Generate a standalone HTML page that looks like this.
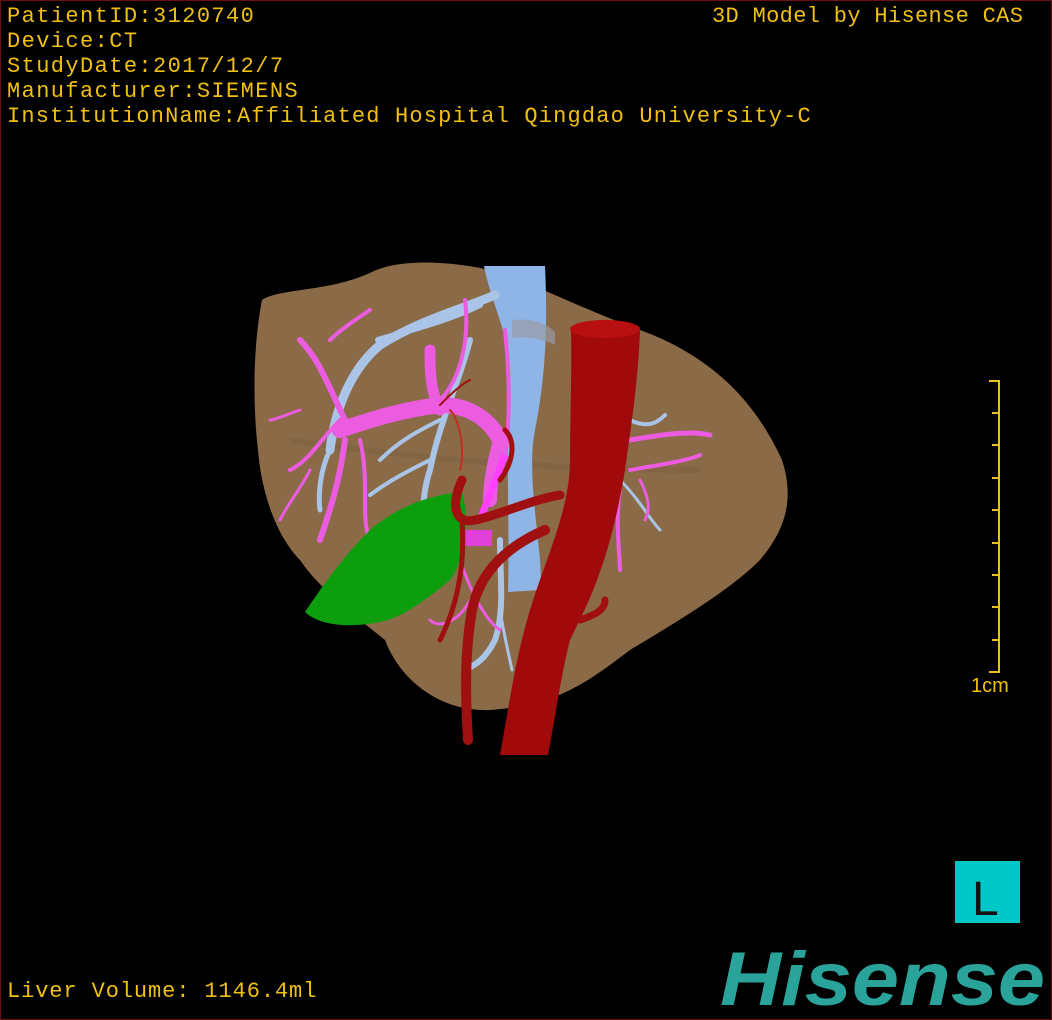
<!DOCTYPE html>
<html><head><meta charset="utf-8"><style>
html,body{margin:0;padding:0;background:#000;}
#w{position:relative;width:1050px;height:1018px;border:1px solid #6a1010;overflow:hidden;background:#000;}
.t{position:absolute;left:6px;color:#f0c010;font-family:"Liberation Mono",monospace;font-size:22px;letter-spacing:1.4px;line-height:25px;white-space:pre;}
</style></head><body><div id="w">
<svg width="1052" height="1020" style="position:absolute;left:-1px;top:-1px">
<!-- liver -->
<path d="M262,300 C280,288 330,292 372,272 C400,258 450,262 480,268 C520,276 560,300 640,330 C700,352 750,390 782,460 C795,500 785,530 760,560 C730,590 680,620 630,650 C590,680 560,705 490,710 C440,712 400,680 385,640 C360,620 320,590 300,560 C280,540 262,500 258,450 C252,400 254,340 262,300 Z" fill="#8a6a47"/>
<path d="M290,440 C360,450 500,470 700,470" stroke="#7e6040" stroke-width="6" fill="none" opacity=".5"/>
<!-- IVC -->
<path d="M484,266 L545,266 C548,330 545,380 535,430 C525,480 545,560 540,590 L508,592 C510,520 505,450 510,380 C512,340 490,300 484,266 Z" fill="#8fb4e6"/>
<path d="M512,320 C530,318 545,322 555,332 L555,345 C540,338 525,336 512,338 Z" fill="#9a9aa4" opacity=".7"/>
<!-- blue branches -->
<g stroke="#a9c4e6" fill="none" stroke-linecap="round">
<path d="M495,295 C460,310 420,320 380,345 C350,370 335,410 330,450" stroke-width="9"/>
<path d="M480,305 C450,320 410,330 378,340" stroke-width="6"/>
<path d="M330,450 C320,470 318,495 320,510" stroke-width="5"/>
<path d="M470,340 C460,380 440,420 430,470 C420,500 425,520 420,540" stroke-width="6"/>
<path d="M440,420 C420,430 400,440 380,460" stroke-width="4"/>
<path d="M430,460 C410,470 390,480 370,495" stroke-width="4"/>
<path d="M500,540 C500,580 505,610 495,640 C485,660 475,665 465,670" stroke-width="6"/>
<path d="M500,610 C505,640 510,660 512,670" stroke-width="3"/>
<path d="M630,420 C650,430 660,420 665,415" stroke-width="4"/>
<path d="M620,480 C640,500 650,520 660,530" stroke-width="3"/>
</g>
<!-- pink branches -->
<g stroke="#ec5ce0" fill="none" stroke-linecap="round">
<path d="M340,430 C370,420 400,410 440,405 C470,405 490,420 500,440" stroke-width="16"/>
<path d="M430,350 C430,370 430,390 440,410" stroke-width="11"/>
<path d="M345,420 C330,390 320,360 300,340" stroke-width="6"/>
<path d="M340,420 C320,440 310,460 290,470" stroke-width="4"/>
<path d="M345,440 C340,480 330,510 320,540" stroke-width="6"/>
<path d="M360,440 C370,480 360,520 370,540" stroke-width="4"/>
<path d="M330,340 C340,330 355,320 370,310" stroke-width="4"/>
<path d="M440,400 C460,380 470,340 465,300" stroke-width="4"/>
<path d="M310,470 C300,490 290,500 280,520" stroke-width="3"/>
<path d="M300,410 C285,415 275,420 270,420" stroke-width="3"/>
<path d="M630,440 C660,435 690,430 710,435" stroke-width="5"/>
<path d="M630,470 C660,465 690,460 700,455" stroke-width="4"/>
<path d="M640,480 C650,500 650,510 645,520" stroke-width="3"/>
<path d="M620,490 C615,520 620,560 620,570" stroke-width="4"/>
<path d="M500,440 C495,460 490,480 490,500" stroke-width="14"/>
<path d="M470,600 C460,620 440,630 430,620" stroke-width="3"/>
<path d="M460,560 C470,590 485,620 500,630" stroke-width="3"/>
<path d="M505,330 C510,380 510,420 505,460" stroke-width="4"/>
</g>
<rect x="458" y="530" width="34" height="16" fill="#e040d8"/>
<path d="M480,520 L505,455" stroke="#ff40ff" stroke-width="7"/>
<!-- green gallbladder -->
<path d="M305,612 C320,590 340,560 370,530 C400,505 430,495 462,492 C470,520 465,560 450,580 C420,605 400,618 380,622 C350,628 320,626 305,612 Z" fill="#0d9e0d"/>
<!-- small red arteries -->
<g stroke="#a01010" fill="none" stroke-linecap="round">
<path d="M560,495 C530,500 500,515 475,520 C455,525 450,505 462,480" stroke-width="9"/>
<path d="M545,530 C510,545 480,570 472,610 C465,650 465,690 468,740" stroke-width="10"/>
<path d="M462,520 C465,560 460,600 440,640" stroke-width="5"/>
<path d="M500,480 C515,460 515,440 505,430" stroke-width="5"/>
<path d="M580,620 C595,615 605,610 605,600" stroke-width="7"/>
<path d="M440,405 C450,395 460,385 470,380" stroke-width="2"/>
<path d="M450,410 C460,420 465,450 460,470" stroke-width="2" stroke="#c03020"/>
</g>
<!-- aorta -->
<path d="M571,330 C600,318 640,322 640,332 C638,380 632,420 625,470 C610,560 590,600 570,640 C560,680 555,720 548,755 L500,755 C510,700 515,660 530,610 C545,560 570,510 570,460 C570,420 572,370 571,330 Z" fill="#a00a0a"/>
<ellipse cx="605" cy="329" rx="35" ry="9" fill="#b81010"/>
<!-- scale bar -->
<g stroke="#e8c020" stroke-width="2">
<line x1="999" y1="380" x2="999" y2="673"/>
<line x1="989" y1="381" x2="999" y2="381"/><line x1="992" y1="413" x2="999" y2="413"/><line x1="992" y1="445" x2="999" y2="445"/><line x1="992" y1="478" x2="999" y2="478"/><line x1="992" y1="510" x2="999" y2="510"/><line x1="992" y1="543" x2="999" y2="543"/><line x1="992" y1="575" x2="999" y2="575"/><line x1="992" y1="607" x2="999" y2="607"/><line x1="992" y1="640" x2="999" y2="640"/><line x1="989" y1="672" x2="999" y2="672"/>
</g>
<text x="971" y="692" fill="#f0c010" font-family="Liberation Sans, sans-serif" font-size="20">1cm</text>
<rect x="955" y="861" width="65" height="62" fill="#00c8c8"/>
<text x="972" y="915" fill="#111" font-family="Liberation Sans, sans-serif" font-size="48">L</text>
<text x="720" y="1005" fill="#2aa39a" font-family="Liberation Sans, sans-serif" font-weight="bold" font-style="italic" font-size="76" textLength="325" lengthAdjust="spacingAndGlyphs">Hisense</text>
</svg>
<div class="t" style="top:3px">PatientID:3120740</div>
<div class="t" style="top:28px">Device:CT</div>
<div class="t" style="top:53px">StudyDate:2017/12/7</div>
<div class="t" style="top:78px">Manufacturer:SIEMENS</div>
<div class="t" style="top:103px;letter-spacing:1.17px">InstitutionName:Affiliated Hospital Qingdao University-C</div>
<div class="t" style="top:3px;left:711px;letter-spacing:0.33px">3D Model by Hisense CAS</div>
<div class="t" style="top:978px;letter-spacing:0.9px">Liver Volume: 1146.4ml</div>
</div></body></html>
